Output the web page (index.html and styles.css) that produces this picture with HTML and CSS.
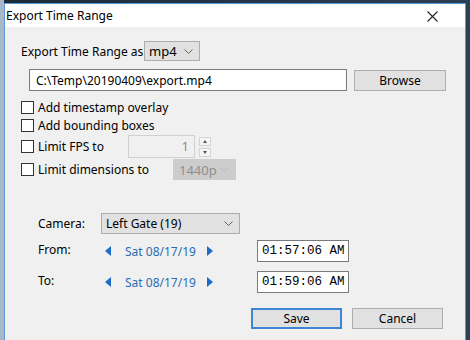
FILE: index.html
```html
<!DOCTYPE html>
<html>
<head>
    <meta charset="utf-8">
    <title>Export Time Range</title>
    <link rel="stylesheet" href="styles.css">
</head>
<body>
    <div class="dialog">
        <div class="titlebar">
            <span class="title">Export Time Range</span>
            <svg class="close" width="11" height="11" viewBox="0 0 11 11"><path d="M0.5 0.5 L10.5 10.5 M10.5 0.5 L0.5 10.5" fill="none" stroke="#222222" stroke-width="1.1"/></svg>
        </div>
        <div class="content">
            <div class="row format-row">
                <span class="label">Export Time Range as</span>
                <div class="combo format-combo">
                    <span>mp4</span>
                    <svg class="chev" width="9" height="5" viewBox="0 0 9 5"><path d="M0.5 0.5 L4.5 4.5 L8.5 0.5" fill="none" stroke="#606060" stroke-width="1"/></svg>
                </div>
            </div>
            <div class="row path-row">
                <div class="textbox path">C:\Temp\20190409\export.mp4</div>
                <button class="btn browse">Browse</button>
            </div>
            <div class="row check-row first">
                <span class="check"></span><span>Add timestamp overlay</span>
            </div>
            <div class="row check-row">
                <span class="check"></span><span>Add bounding boxes</span>
            </div>
            <div class="row check-row fps-row">
                <span class="check"></span><span class="check-label">Limit FPS to</span>
                <div class="spin">1</div>
                <div class="spin-arrows">
                    <span class="up"></span>
                    <span class="down"></span>
                </div>
            </div>
            <div class="row check-row dim-row">
                <span class="check"></span><span class="check-label">Limit dimensions to</span>
                <div class="combo disabled">
                    <span>1440p</span>
                    <svg class="chev" width="9" height="5" viewBox="0 0 9 5"><path d="M0.5 0.5 L4.5 4.5 L8.5 0.5" fill="none" stroke="#b8b8b8" stroke-width="1"/></svg>
                </div>
            </div>

            <div class="row field-row camera-row">
                <span class="field-label">Camera:</span>
                <div class="combo camera-combo">
                    <span>Left Gate (19)</span>
                    <svg class="chev" width="9" height="5" viewBox="0 0 9 5"><path d="M0.5 0.5 L4.5 4.5 L8.5 0.5" fill="none" stroke="#606060" stroke-width="1"/></svg>
                </div>
            </div>
            <div class="row field-row time-row">
                <span class="field-label">From:</span>
                <div class="date">
                    <span class="arrow left"></span>
                    <span class="date-text">Sat 08/17/19</span>
                    <span class="arrow right"></span>
                </div>
                <div class="textbox time">01:57:06 AM</div>
            </div>
            <div class="row field-row time-row">
                <span class="field-label">To:</span>
                <div class="date">
                    <span class="arrow left"></span>
                    <span class="date-text">Sat 08/17/19</span>
                    <span class="arrow right"></span>
                </div>
                <div class="textbox time">01:59:06 AM</div>
            </div>

            <div class="row buttons">
                <button class="btn save">Save</button>
                <button class="btn cancel">Cancel</button>
            </div>
        </div>
    </div>
</body>
</html>
```

FILE: styles.css
```css
body{
    margin: 0;
    background: linear-gradient(to right, #a9b8c8 0, #a9b8c8 4px, #1d2a38 4px, #2b3f55 100%);
    font-family: "Noto Sans", "Liberation Sans", sans-serif;
    font-size: 12px;
    color: #000000;
    height: 340px;
    overflow: hidden;
}

.dialog{
    margin: 3px 0 0 4px;
    width: 460px;
    height: 345px;
    background-color: #f0f0f0;
    border: 1px solid #5a97d4;
}

.titlebar{
    height: 23px;
    background-color: #ffffff;
    display: flex;
    align-items: center;
    justify-content: space-between;
    padding: 0 27px 0 1px;
}

.title{
    font-size: 12px;
}

.close{
    margin-top: 1px;
}

.content{
    display: flex;
    flex-direction: column;
    padding: 0 0 0 16px;
}

.row{
    display: flex;
    align-items: center;
}

.format-row{
    margin-top: 14px;
    height: 20px;
}

.format-row .label{
    width: 123px;
}

.combo{
    display: flex;
    align-items: center;
    justify-content: space-between;
    box-sizing: border-box;
    height: 20px;
    padding: 0 6px 0 4px;
    background-color: #e1e1e1;
    border: 1px solid #adadad;
}

.format-combo{
    width: 56px;
    font-size: 13px;
}

.path-row{
    margin-top: 8px;
    padding-left: 8px;
}

.textbox{
    box-sizing: border-box;
    background-color: #ffffff;
    border: 1px solid #7a7a7a;
    height: 22px;
    display: flex;
    align-items: center;
}

.path{
    width: 318px;
    padding-left: 6px;
}

.btn{
    box-sizing: border-box;
    height: 21px;
    font-family: "Noto Sans", "Liberation Sans", sans-serif;
    font-size: 12px;
    background-color: #e1e1e1;
    border: 1px solid #adadad;
    padding: 0;
}

.browse{
    width: 92px;
    margin-left: 7px;
}

.check-row{
    height: 18px;
}

.check-row.first{
    margin-top: 7px;
}

.fps-row{
    height: 23px;
    margin-top: 1px;
}

.dim-row{
    height: 21px;
    margin-top: 1px;
}

.check{
    box-sizing: border-box;
    width: 13px;
    height: 13px;
    border: 1px solid #333333;
    background-color: #ffffff;
    margin-right: 4px;
}

.fps-row .check-label{
    width: 90px;
}

.dim-row .check-label{
    width: 135px;
}

.spin{
    box-sizing: border-box;
    width: 67px;
    height: 23px;
    border: 1px solid #d0d0d0;
    background-color: #f0f0f0;
    color: #8a8a8a;
    text-align: right;
    padding-right: 5px;
    line-height: 21px;
    font-size: 13px;
}

.spin-arrows{
    display: flex;
    flex-direction: column;
    gap: 2px;
    margin-left: 4px;
}

.spin-arrows span{
    box-sizing: border-box;
    width: 12px;
    height: 9px;
    border: 1px solid #d4d4d4;
    background-color: #f5f5f5;
    position: relative;
}

.spin-arrows span::after{
    content: "";
    position: absolute;
    left: 3px;
    border-left: 2.5px solid transparent;
    border-right: 2.5px solid transparent;
}

.spin-arrows .up::after{
    top: 2px;
    border-bottom: 3px solid #555555;
}

.spin-arrows .down::after{
    top: 2px;
    border-top: 3px solid #555555;
}

.disabled{
    width: 63px;
    height: 21px;
    background-color: #cccccc;
    border-color: #cccccc;
    color: #8f8f8f;
    padding-left: 5px;
    font-size: 13px;
}

.field-row{
    padding-left: 17px;
}

.field-label{
    width: 63px;
}

.camera-row{
    margin-top: 33px;
    height: 21px;
}

.camera-combo{
    width: 139px;
    height: 21px;
}

.time-row{
    height: 22px;
    align-items: center;
}

.camera-row + .time-row{
    margin-top: 6px;
}

.time-row + .time-row{
    margin-top: 9px;
}

.time-row .field-label{
    align-self: flex-start;
    margin-top: 1px;
}

.date{
    display: flex;
    align-items: center;
    width: 156px;
    color: #2a6db5;
}

.date-text{
    margin: 0 11px 0 14px;
}

.arrow{
    width: 0;
    height: 0;
    border-top: 5px solid transparent;
    border-bottom: 5px solid transparent;
}

.arrow.left{
    margin-left: 4px;
    border-right: 6px solid #1e6cc4;
}

.arrow.right{
    border-left: 6px solid #1e6cc4;
}

.time{
    width: 92px;
    font-family: "Liberation Mono", monospace;
    font-size: 12.5px;
    padding-left: 4px;
}

.buttons{
    margin-top: 15px;
    padding-left: 230px;
}

.save{
    width: 91px;
    border: 2px solid #3d86d1;
}

.cancel{
    width: 91px;
    margin-left: 10px;
}
```
